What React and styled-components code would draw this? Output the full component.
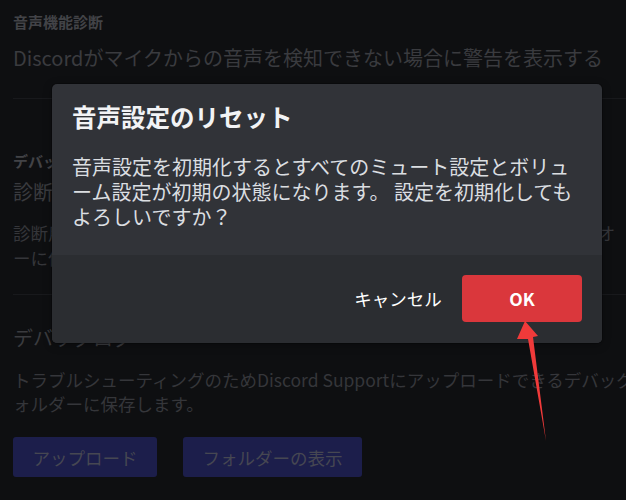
import React from 'react';
import styled, { createGlobalStyle } from 'styled-components';

const GlobalStyle = createGlobalStyle`
  html, body {
    margin: 0;
    padding: 0;
    background: #0e0f11;
    overflow: hidden;
  }
  body {
    width: 626px;
    height: 500px;
    font-family: "Noto Sans CJK JP", "Noto Sans", sans-serif;
  }
`;

const Screen = styled.div`
  position: relative;
  width: 626px;
  height: 500px;
  overflow: hidden;
  background: #0e0f11;
`;

// dimmed settings page behind the modal
const Page = styled.div`
  width: 720px;
  padding: 12px 0 0 13px;
  box-sizing: border-box;
`;

const SectionLabel = styled.div`
  font-size: 15px;
  line-height: 20px;
  font-weight: 700;
  color: #424347;
  margin-top: ${(p) => p.$top || 0}px;
`;

const SettingTitle = styled.div`
  font-size: 20px;
  line-height: 28px;
  color: #3a3b3f;
  white-space: nowrap;
  margin-top: ${(p) => p.$top || 0}px;
`;

const Description = styled.div`
  font-size: 17.5px;
  line-height: ${(p) => p.$lh || 25}px;
  color: #35363a;
  white-space: nowrap;
  margin-top: ${(p) => p.$top || 0}px;
`;

const Divider = styled.div`
  height: 1px;
  background: #18191c;
  margin-top: ${(p) => p.$top || 0}px;
`;

const ButtonRow = styled.div`
  display: flex;
  gap: 26px;
  margin-top: 21px;
`;

const PageButton = styled.div`
  height: 40px;
  padding: 0 19.5px;
  display: flex;
  align-items: center;
  border-radius: 3px;
  background: #1c1e4b;
  color: #464752;
  font-size: 17.5px;
`;

// modal
const Modal = styled.div`
  position: absolute;
  left: 52px;
  top: 84px;
  width: 550px;
  border-radius: 5px;
  overflow: hidden;
  background: #313338;
  box-shadow: 0 0 0 1px rgba(0, 0, 0, 0.2), 0 2px 10px rgba(0, 0, 0, 0.3);
`;

const ModalHeader = styled.div`
  padding: 18px 20px 0;
`;

const ModalTitle = styled.h1`
  margin: 0;
  font-size: 24.5px;
  line-height: 30px;
  font-weight: 700;
  color: #f2f3f5;
`;

const ModalBody = styled.div`
  padding: 22px 20px 26px;
  font-size: 20px;
  line-height: 25px;
  color: #dbdee1;
  line-break: loose;
`;

const ModalFooter = styled.div`
  display: flex;
  justify-content: flex-end;
  gap: 4px;
  padding: 20px 20px 21px;
  background: #2b2d31;
`;

const FooterButton = styled.div`
  width: 120px;
  height: 47px;
  display: flex;
  align-items: center;
  justify-content: center;
  border-radius: 4px;
  font-size: 17.5px;
  color: #ffffff;
  font-weight: ${(p) => (p.$primary ? 600 : 400)};
  background: ${(p) => (p.$primary ? '#da373c' : 'transparent')};
`;

const Annotation = styled.svg`
  position: absolute;
  left: 0;
  top: 0;
  pointer-events: none;
`;

export default function App() {
  return (
    <Screen>
      <GlobalStyle />
      <Page>
        <SectionLabel>音声機能診断</SectionLabel>
        <SettingTitle $top={12}>
          Discordがマイクからの音声を検知できない場合に警告を表示する
        </SettingTitle>
        <Divider $top={26} />

        <SectionLabel $top={52}>デバッグ</SectionLabel>
        <SettingTitle $top={7}>診断ログの記録</SettingTitle>
        <Description $top={14}>
          診断用の音声ログを記録します。問題が発生した場合にDiscordサポートがオ
          <br />
          ーに保存されたファイルを確認できます。
        </Description>
        <Divider $top={24} />

        <SettingTitle $top={29}>デバッグログ</SettingTitle>
        <Description $top={16} $lh={24}>
          トラブルシューティングのためDiscord Supportにアップロードできるデバッグログをフ
          <br />
          ォルダーに保存します。
        </Description>
        <ButtonRow>
          <PageButton>アップロード</PageButton>
          <PageButton>フォルダーの表示</PageButton>
        </ButtonRow>
      </Page>

      <Modal>
        <ModalHeader>
          <ModalTitle>音声設定のリセット</ModalTitle>
        </ModalHeader>
        <ModalBody>
          音声設定を初期化するとすべてのミュート設定とボリューム設定が初期の状態になります。 設定を初期化してもよろしいですか？
        </ModalBody>
        <ModalFooter>
          <FooterButton>キャンセル</FooterButton>
          <FooterButton $primary>OK</FooterButton>
        </ModalFooter>
      </Modal>

      <Annotation width="626" height="500" viewBox="0 0 626 500">
        <polygon
          points="525,321 538,336 533,337 546,441 528,339 517,339"
          fill="#f03a3a"
        />
      </Annotation>
    </Screen>
  );
}
